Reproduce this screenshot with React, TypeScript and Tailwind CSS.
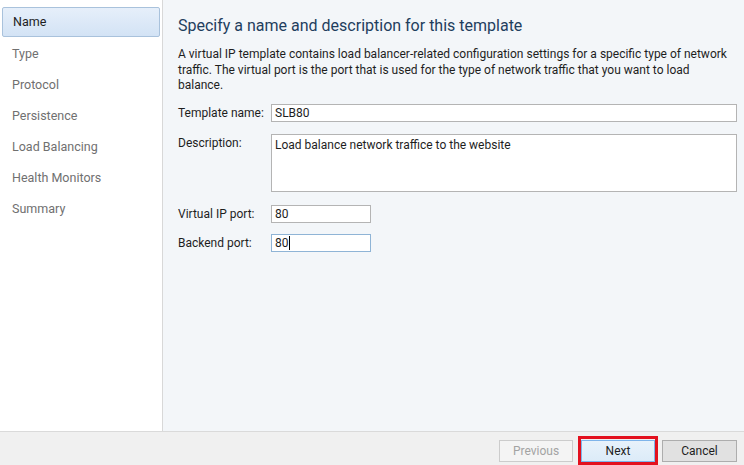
import React from "react";

const items = ["Type", "Protocol", "Persistence", "Load Balancing", "Health Monitors", "Summary"];

export default function App() {
  return (
    <div
      className="w-[744px] h-[465px] flex flex-col overflow-hidden text-[12px] text-[#1e1e1e]"
      style={{ fontFamily: 'Roboto, "Open Sans", sans-serif' }}
    >
      <div className="flex flex-1 min-h-0">
        <div className="w-[163px] shrink-0 bg-white border-r border-[#d8d8d8] pt-[7px] pl-[2px] pr-[2px]">
          <div className="h-[30px] flex items-center pl-[10px] rounded-[2px] border border-[#a9c2dc] bg-gradient-to-b from-[#e6effa] to-[#d3e3f5] text-[12.5px] text-[#1e1e1e]">
            Name
          </div>
          <div className="flex flex-col pt-[2px]">
            {items.map((t) => (
              <div key={t} className="h-[31px] flex items-center pl-[10px] text-[12.5px] text-[#707070]">
                {t}
              </div>
            ))}
          </div>
        </div>
        <div className="flex-1 bg-[#f3f6f9] pl-[15px] pr-[7px] pt-[14px]">
          <div className="text-[16px] leading-[24px] text-[#1f3e5e]">
            Specify a name and description for this template
          </div>
          <p className="mt-[9px] leading-[15.5px] text-[#1e1e1e]">
            A virtual IP template contains load balancer-related configuration settings for a specific type of network
            <br />
            traffic. The virtual port is the port that is used for the type of network traffic that you want to load
            <br />
            balance.
          </p>
          <div className="mt-[10px] flex items-center">
            <div className="w-[93px] shrink-0">Template name:</div>
            <div className="flex-1 h-[18px] border border-[#b4b4b4] bg-white flex items-center pl-[3px]">SLB80</div>
          </div>
          <div className="mt-[12px] flex items-start">
            <div className="w-[93px] shrink-0">Description:</div>
            <div className="flex-1 h-[58px] border border-[#b4b4b4] bg-white pl-[3px] pt-[1px]">
              Load balance network traffice to the website
            </div>
          </div>
          <div className="mt-[13px] flex items-center">
            <div className="w-[93px] shrink-0">Virtual IP port:</div>
            <div className="w-[100px] h-[18px] border border-[#b4b4b4] bg-white flex items-center pl-[3px]">80</div>
          </div>
          <div className="mt-[11px] flex items-center">
            <div className="w-[93px] shrink-0">Backend port:</div>
            <div className="w-[100px] h-[18px] border border-[#8fb4d6] bg-white flex items-center pl-[3px]">
              80<span className="inline-block w-[1px] h-[14px] bg-black" />
            </div>
          </div>
        </div>
      </div>
      <div className="h-[34px] shrink-0 bg-[#f0f0f0] border-t border-[#dadada] flex items-start justify-end pt-[8px] pr-[7px]">
        <div className="w-[74px] h-[22px] border border-[#cccccc] bg-[#f4f4f4] text-[#a3a3a3] flex items-center justify-center">
          Previous
        </div>
        <div className="relative ml-[8px]">
          <div className="w-[74px] h-[22px] border border-[#7eb4ea] bg-gradient-to-b from-[#e8f2fb] to-[#dcebf8] flex items-center justify-center">
            Next
          </div>
          <span className="absolute -top-[4px] -left-[3px] -right-[3px] -bottom-[3px] border-[3px] border-[#e3101e]" />
        </div>
        <div className="ml-[7px] w-[75px] h-[22px] border border-[#adadad] bg-[#e1e1e1] flex items-center justify-center">
          Cancel
        </div>
      </div>
    </div>
  );
}
